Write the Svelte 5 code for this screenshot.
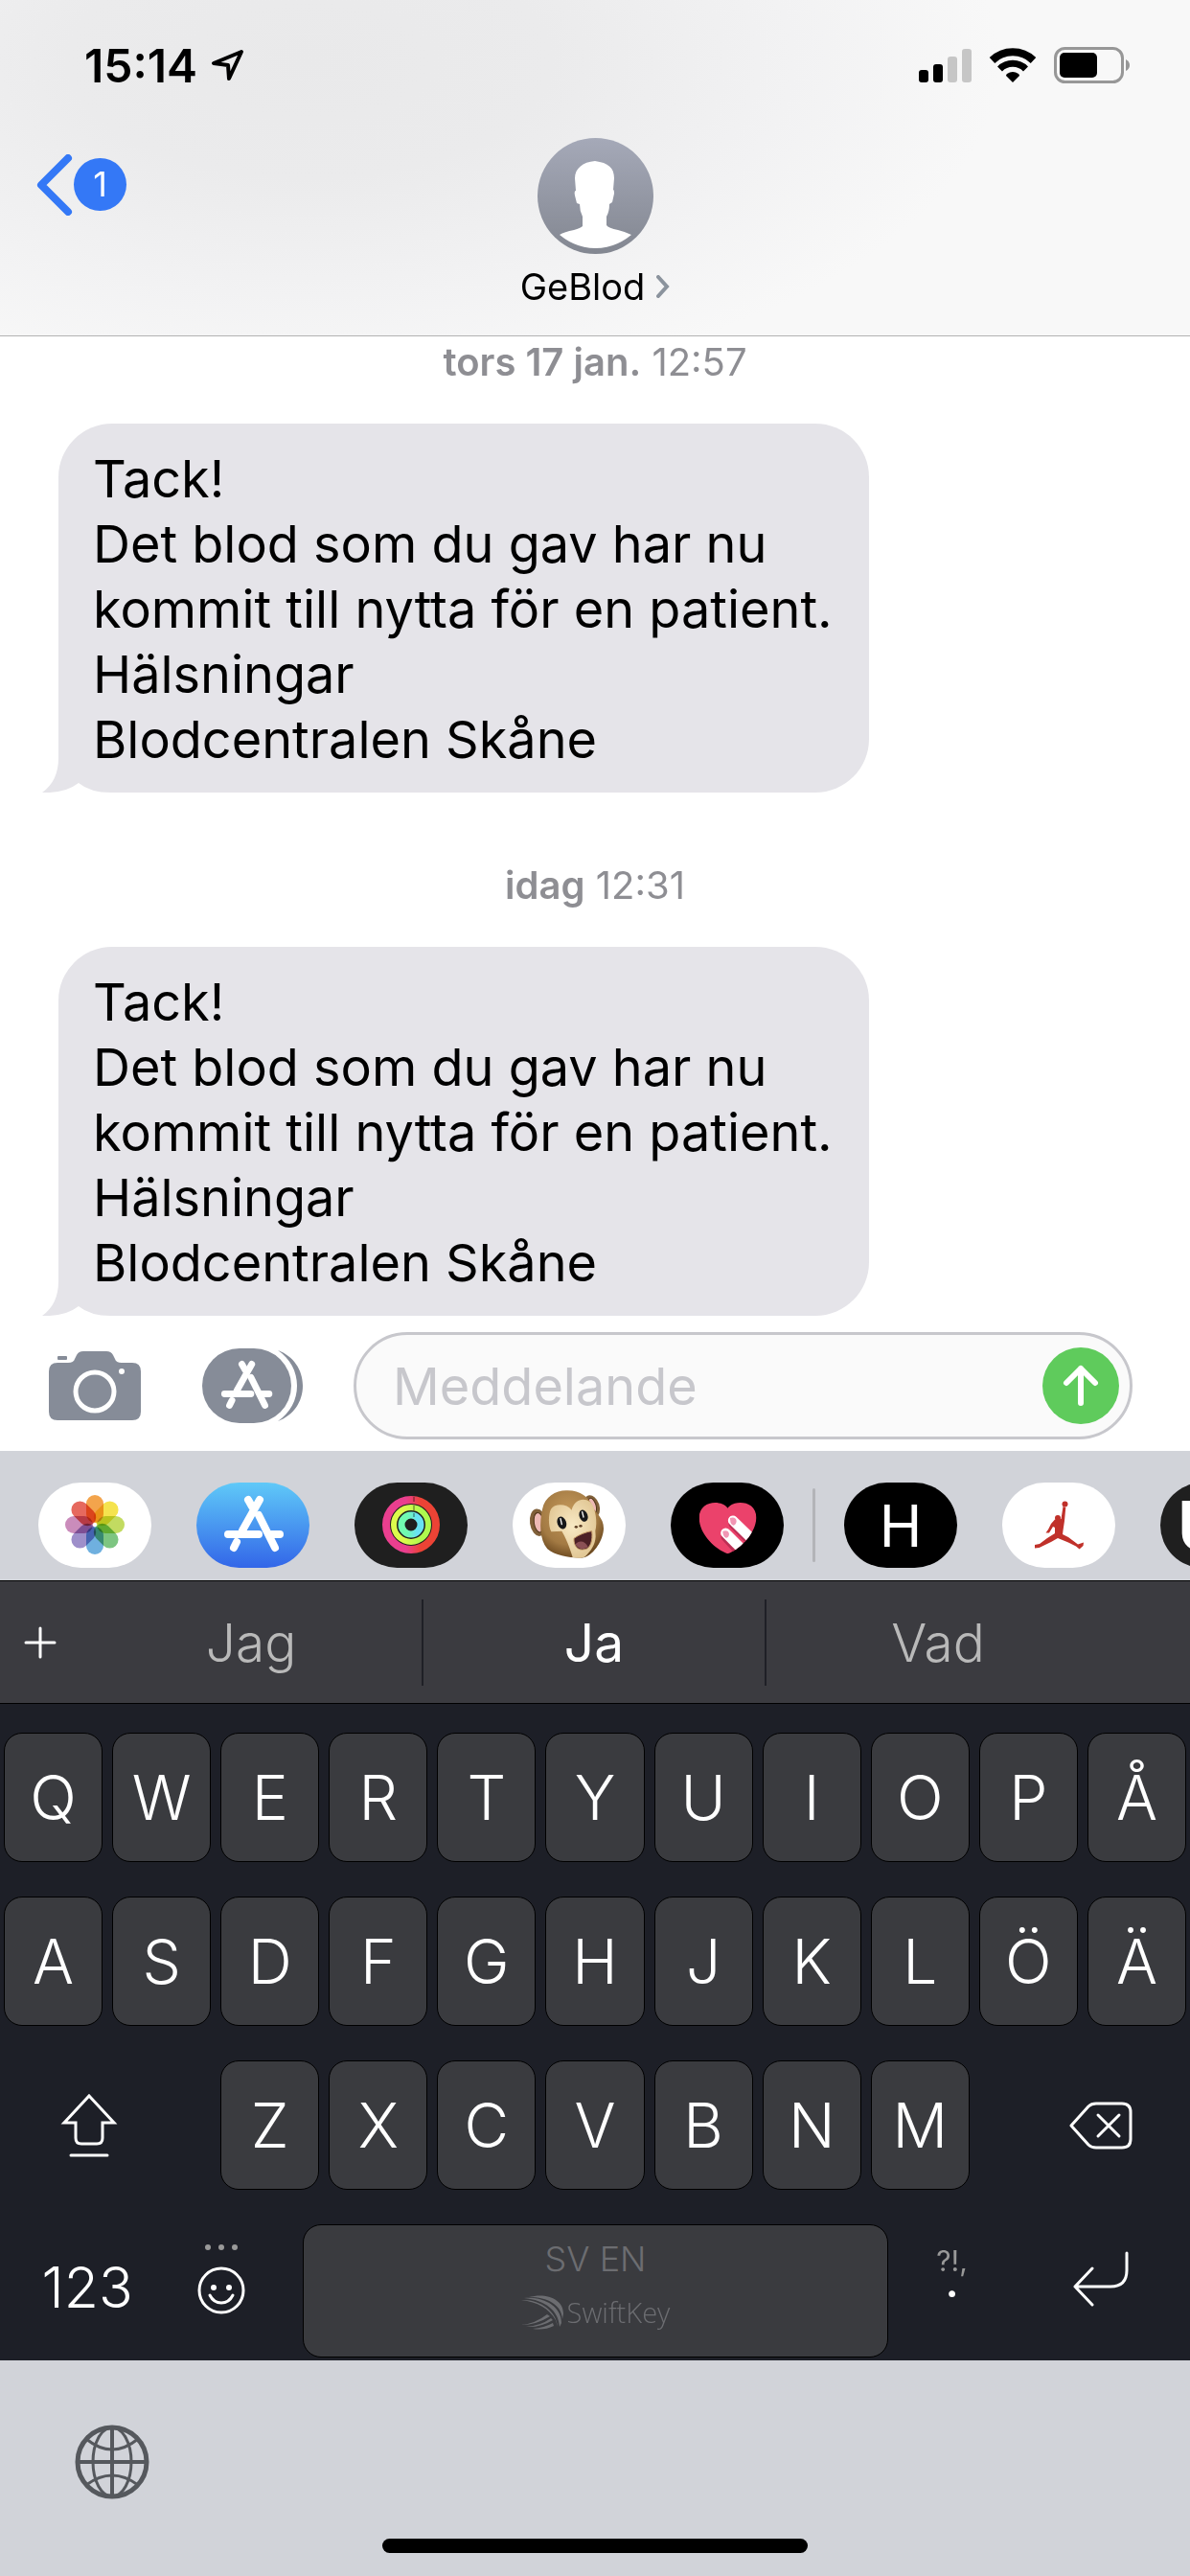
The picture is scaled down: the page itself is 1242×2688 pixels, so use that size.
<script>
  // --- State ---
  let draft = $state('');
  let messages = $state([
    {
      day: 'tors 17 jan.',
      time: '12:57',
      text: 'Tack!\nDet blod som du gav har nu kommit till nytta för en patient.\nHälsningar\nBlodcentralen Skåne'
    },
    {
      day: 'idag',
      time: '12:31',
      text: 'Tack!\nDet blod som du gav har nu kommit till nytta för en patient.\nHälsningar\nBlodcentralen Skåne'
    }
  ]);

  const suggestions = ['Jag', 'Ja', 'Vad'];
  const topRows = [[...'QWERTYUIOPÅ'], [...'ASDFGHJKLÖÄ']];
  const bottomRow = [...'ZXCVBNM'];

  const petals = ['#f29a38', '#f4e03a', '#bcd750', '#6fbf73', '#5fa8dc', '#9483c4', '#c57fb4', '#e4584c'];

  function type(text) {
    draft += text;
  }

  function erase() {
    draft = draft.slice(0, -1);
  }

  function sendMessage(e) {
    e.preventDefault();
    draft = '';
  }
</script>

{#snippet storeGlyph()}
  <g fill="none" stroke="#fff" stroke-width="8" stroke-linecap="round">
    <path d="M66 18 L48 50" />
    <path d="M54 18 L58 25" />
    <path d="M65 34 L82 68" />
    <path d="M33 54 H65" />
    <path d="M78 54 H87" />
    <path d="M42 62 L39 68" />
  </g>
{/snippet}

{#snippet key(letter)}
  <button class="key" onclick={() => type(letter)}>{letter}</button>
{/snippet}

<div class="phone">
  <header>
    <div class="status">
      <div class="clock">
        <span>15:14</span>
        <svg width="36" height="36" viewBox="0 0 36 36" aria-hidden="true">
          <path d="M32 4 L3 16 L18 18 L19 32 Z" fill="none" stroke="#000" stroke-width="4" stroke-linejoin="round" />
        </svg>
      </div>
      <div class="signals">
        <svg width="55" height="36" viewBox="0 0 55 36" aria-hidden="true">
          <rect x="0" y="23" width="10" height="13" rx="3" />
          <rect x="15" y="17" width="10" height="19" rx="3" />
          <rect x="30" y="9" width="10" height="27" rx="3" fill="#c6c6c6" />
          <rect x="45" y="1" width="10" height="35" rx="3" fill="#c6c6c6" />
        </svg>
        <svg width="50" height="36" viewBox="0 0 50 36" aria-hidden="true">
          <path d="M3.500 13 A31 31 0 0 1 46.500 13" fill="none" stroke="#000" stroke-width="8" />
          <path d="M11.500 22 A19 19 0 0 1 38.500 22" fill="none" stroke="#000" stroke-width="7" />
          <path d="M25 36 L18 29 Q18 28 19 27 Q25 23 31 27 Q32 28 32 29 Z" />
        </svg>
        <svg width="80" height="38" viewBox="0 0 80 38" aria-hidden="true">
          <rect x="1.500" y="1.500" width="70" height="35" rx="10" fill="none" stroke="#979797" stroke-width="3" />
          <rect x="6" y="6" width="39" height="26" rx="5" />
          <path d="M75 13 Q79 15 79 19 Q79 23 75 25 Z" fill="#979797" />
        </svg>
      </div>
    </div>

    <nav>
      <a class="back" href="#inbox" aria-label="Tillbaka">
        <svg width="38" height="64" viewBox="0 0 38 64" aria-hidden="true">
          <path d="M33 4 L5 32 L33 60" fill="none" stroke="#3478f6" stroke-width="8" stroke-linecap="round" stroke-linejoin="round" />
        </svg>
        <span class="count">1</span>
      </a>
      <a class="contact" href="#contact">
        <svg width="121" height="121" viewBox="0 0 121 121" aria-hidden="true">
          <defs>
            <linearGradient id="avatar" x1="0" y1="0" x2="0" y2="1">
              <stop offset="0" stop-color="#a5a9b8" />
              <stop offset="1" stop-color="#838791" />
            </linearGradient>
          </defs>
          <circle cx="60.500" cy="60.500" r="60.500" fill="url(#avatar)" />
          <path
            fill="#fff"
            d="M60 24 C47 25 39 32 39 42 L40 55 Q38 55 39 60 L41 68 L44 69 Q44 76 47 82 L47 92 Q45 94 38 96 Q28 98 23 101 Q40 115 60.500 115 Q81 115 98 101 Q92 98 84 96 Q74 94 72 91 L72 82 Q75 77 75 69 L78 67 L80 58 Q80 54 79 54 L80 42 C80 31 74 26 60 24 Z"
          />
        </svg>
        <span class="name">
          GeBlod
          <svg width="14" height="24" viewBox="0 0 14 24" aria-hidden="true">
            <path d="M2 2 L11 12 L2 22" fill="none" stroke="#8b939d" stroke-width="4" stroke-linecap="round" />
          </svg>
        </span>
      </a>
    </nav>
  </header>

  <main>
    {#each messages as msg}
      <div class="stamp"><strong>{msg.day}</strong> <time>{msg.time}</time></div>
      <div class="bubble">
        <svg class="tail" width="76" height="60" viewBox="0 0 76 60" aria-hidden="true">
          <path fill="#fff" d="M0 0 H17 V60 H0 Z M17 30 H74 V60 H17 Z" />
          <path fill="#e5e4e9" d="M17 0 H76 V60 H72 Q50 60 38 50 Q24 61 0 60 Q17 48 17 24 Z" />
        </svg>
        <p>{msg.text}</p>
      </div>
    {/each}
  </main>

  <form class="composer" onsubmit={sendMessage}>
    <button type="button" class="bare" aria-label="Kamera">
      <svg width="96" height="72" viewBox="0 0 96 72" fill="#868c98">
        <path d="M9 12 H20 Q26 12 27 8 L29 4 Q31 0 36 0 H60 Q65 0 67 4 L69 8 Q70 12 76 12 H87 Q96 12 96 21 V63 Q96 72 87 72 H9 Q0 72 0 63 V21 Q0 12 9 12 Z" />
        <rect x="9" y="5" width="10" height="4" rx="1" />
        <circle cx="48" cy="42" r="20" fill="none" stroke="#fff" stroke-width="5" />
        <circle cx="76" cy="21" r="3" fill="#fff" />
      </svg>
    </button>
    <button type="button" class="bare" aria-label="Appar">
      <svg width="105" height="78" viewBox="0 0 105 78" fill="#868c98">
        <rect width="93" height="78" rx="39" />
        <path d="M79 2 C95 8 105 22 105 39 S95 70 79 76 C92 67 99 54 99 39 S92 11 79 2 Z" />
        <g transform="translate(-5 1) scale(0.86)">{@render storeGlyph()}</g>
      </svg>
    </button>
    <div class="field">
      <input bind:value={draft} placeholder="Meddelande" aria-label="Meddelande" />
      <button class="bare" type="submit" aria-label="Skicka">
        <svg width="80" height="80" viewBox="0 0 80 80">
          <circle cx="40" cy="40" r="40" fill="#5fcb5c" />
          <path d="M40 58 V22 M25 37 L40 22 L55 37" fill="none" stroke="#fff" stroke-width="6" stroke-linecap="round" stroke-linejoin="round" />
        </svg>
      </button>
    </div>
  </form>

  <!-- iMessage app drawer -->
  <div class="apps">
    <button class="app" aria-label="Bilder">
      <svg viewBox="0 0 118 89">
        <g transform="translate(59 44)">
          {#each petals as color, i}
            <rect class="petal" x="-9" y="-31" width="18" height="29" rx="9" fill={color} transform="rotate({i * 45})" />
          {/each}
        </g>
      </svg>
    </button>
    <button class="app store" aria-label="App Store">
      <svg viewBox="0 0 118 89">{@render storeGlyph()}</svg>
    </button>
    <button class="app dark" aria-label="Aktivitet">
      <svg viewBox="0 0 118 89" fill="none">
        <defs>
          <linearGradient id="move"><stop offset="0.4" stop-color="#ea3f8f" /><stop offset="0.7" stop-color="#ec4335" /></linearGradient>
          <linearGradient id="exercise"><stop offset="0.3" stop-color="#dcfb4c" /><stop offset="0.8" stop-color="#aef94e" /></linearGradient>
          <linearGradient id="stand"><stop offset="0.3" stop-color="#70fbb0" /><stop offset="0.8" stop-color="#68e2f2" /></linearGradient>
        </defs>
        <circle cx="59" cy="44" r="26" stroke="url(#move)" stroke-width="8" />
        <circle cx="59" cy="44" r="18" stroke="url(#exercise)" stroke-width="6" />
        <circle cx="59" cy="44" r="10" stroke="url(#stand)" stroke-width="7" />
        <path d="M62 15 V20 M62 24 V29 M62 32 V36" stroke="#000" stroke-opacity="0.3" stroke-width="2" />
      </svg>
    </button>
    <button class="app" aria-label="Animoji">
      <svg viewBox="14 26 354 267">
        <defs>
          <radialGradient id="fur" cx="0.45" cy="0.35" r="0.65">
            <stop offset="0" stop-color="#c59a5c" />
            <stop offset="0.7" stop-color="#a37a43" />
            <stop offset="1" stop-color="#6f4c22" />
          </radialGradient>
          <radialGradient id="skin" cx="0.5" cy="0.45" r="0.6">
            <stop offset="0" stop-color="#f8e9c4" />
            <stop offset="1" stop-color="#e0c592" />
          </radialGradient>
        </defs>
        <ellipse cx="94" cy="151" rx="26" ry="43" fill="#80603a" transform="rotate(-8 94 151)" />
        <ellipse cx="96" cy="151" rx="15" ry="31" fill="#edb9b5" stroke="#4f3518" stroke-width="3" transform="rotate(-8 96 151)" />
        <ellipse cx="262" cy="101" rx="24" ry="36" fill="#80603a" transform="rotate(-18 262 101)" />
        <ellipse cx="264" cy="98" rx="11" ry="24" fill="#edb9b5" stroke="#4f3518" stroke-width="3" transform="rotate(-18 264 98)" />
        <path fill="url(#fur)" d="M107 110 C115 70 150 50 184 51 C225 50 253 72 263 98 C270 120 300 135 299 170 C298 205 270 250 240 260 C215 265 150 258 123 234 C98 205 98 150 107 110 Z" />
        <path fill="url(#skin)" d="M199 112 C183 91 146 91 134 109 C126 125 125 160 135 180 L168 178 C178 195 188 215 202 260 C218 264 232 263 241 258 C260 240 273 220 274 195 L273 177 C280 155 275 105 257 87 C235 71 207 81 199 112 Z" />
        <ellipse cx="168" cy="152" rx="14" ry="20" fill="#17181a" transform="rotate(-20 168 152)" />
        <ellipse cx="236" cy="130" rx="13" ry="19" fill="#17181a" transform="rotate(-20 236 130)" />
        <path d="M164 139 L168 157 M232 118 L236 134" stroke="#fff" stroke-width="4" stroke-linecap="round" />
        <ellipse cx="213" cy="165" rx="5" ry="4" fill="#5d3e24" />
        <ellipse cx="227" cy="162" rx="5" ry="4" fill="#5d3e24" />
        <path fill="#4c2026" stroke="#c39a67" stroke-width="3" d="M206 201 C220 190 245 180 262 178 C266 208 257 233 240 235 C218 241 205 224 206 201 Z" />
        <path fill="#8b5055" d="M211 220 C220 205 242 207 250 228 C235 237 222 235 211 220 Z" />
      </svg>
    </button>
    <button class="app black" aria-label="Digital Touch">
      <svg viewBox="509 26 354 267">
        <defs>
          <clipPath id="heart">
            <path d="M687 106 C705 80 778 80 777 137 C775 190 720 238 687 249 C650 235 599 190 598 137 C598 80 670 80 687 106 Z" />
          </clipPath>
        </defs>
        <g clip-path="url(#heart)">
          <rect x="590" y="80" width="200" height="180" fill="#eb426b" />
          <path d="M680 196 L740 262 M704 156 L780 232" stroke="#bd2f55" stroke-width="27" stroke-linecap="round" />
          <path d="M681 184 L745 248 M704 145 L790 229" stroke="#fff" stroke-width="31" stroke-linecap="round" />
          <path d="M695 137 Q713 132 715 147 Q714 159 705 160 Q694 156 695 137 Z M672 178 Q690 173 692 187 Q691 199 682 199 Q672 195 672 178 Z" fill="#f196b4" />
        </g>
      </svg>
    </button>
    <span class="split"></span>
    <button class="app black hm">H</button>
    <button class="app" aria-label="Jordan">
      <svg viewBox="0 0 118 89" fill="#c0312a">
        <circle cx="65.500" cy="22.500" r="3" />
        <circle cx="58" cy="37" r="3" />
        <path d="M63.500 25 L66.300 26 L65 40 L63.500 50 L63 54 L69 57 L79 64.500 L85 62.500 L84.500 66 L80.600 69.500 L77 66.500 L69 62.500 L58 58 L51 62 L38.600 68 L34 68.500 L34 65 L39 64 L47 58 L55 53 L55 47 L53 46 L49 52.500 L45.500 52.500 L48 49 L51 43 L55 38.500 L61.500 38 Z" />
      </svg>
    </button>
    <button class="app dark uber">U</button>
  </div>

  <section class="keyboard">
    <div class="suggestions">
      <button aria-label="Lägg till">
        <svg width="34" height="34" viewBox="0 0 34 34">
          <path d="M17 2 V32 M2 17 H32" stroke="#fff" stroke-width="3" stroke-linecap="round" />
        </svg>
      </button>
      {#each suggestions as word, i}
        <button class="word" class:best={i === 1} onclick={() => type(word + ' ')}>{word}</button>
      {/each}
    </div>

    <div class="rows">
      {#each topRows as row}
        <div class="row">
          {#each row as letter}
            {@render key(letter)}
          {/each}
        </div>
      {/each}

      <div class="row">
        <button class="side shift" aria-label="Skift">
          <svg width="60" height="68" viewBox="0 0 60 68" fill="none" stroke="#fff" stroke-width="3">
            <path d="M30 3 L56 31 H44 V47 Q44 53 38 53 H22 Q16 53 16 47 V31 H4 Z" />
            <path d="M11 65 H49" stroke-linecap="round" />
          </svg>
        </button>
        {#each bottomRow as letter}
          {@render key(letter)}
        {/each}
        <button class="side erase" aria-label="Radera" onclick={erase}>
          <svg width="66" height="50" viewBox="0 0 66 50" fill="none" stroke="#fff" stroke-width="3" stroke-linecap="round">
            <path d="M2 25 L20 5 Q23 2 28 2 H55 Q64 2 64 11 V39 Q64 48 55 48 H28 Q23 48 20 45 Z" stroke-linejoin="round" />
            <path d="M30 14 L52 36 M52 14 L30 36" />
          </svg>
        </button>
      </div>

      <div class="row last">
        <button class="side numbers">123</button>
        <button class="side high" aria-label="Emoji">
          <svg width="50" height="74" viewBox="0 0 50 74">
            <g fill="#999">
              <circle cx="11" cy="4" r="3" />
              <circle cx="25" cy="4" r="3" />
              <circle cx="39" cy="4" r="3" />
            </g>
            <circle cx="25" cy="49" r="23" fill="none" stroke="#fff" stroke-width="3" />
            <circle cx="17" cy="46" r="3" fill="#fff" />
            <circle cx="33" cy="46" r="3" fill="#fff" />
            <path d="M13 54 Q17 62 25 62 Q33 62 37 54" fill="none" stroke="#fff" stroke-width="3" stroke-linecap="round" />
          </svg>
        </button>
        <button class="key space" onclick={() => type(' ')}>
          <span>SV EN</span>
          <span class="brand">
            <svg width="44" height="36" viewBox="0 0 44 36" fill="#6c6d71" aria-hidden="true">
              <path d="M8 2 C26 -3 44 4 44 19 L43 25 C42 10 28 2 8 2 Z" />
              <path d="M3 3 C24 1 42 12 42 29 L40 33 C39 16 25 5 3 3 Z" />
              <path d="M0 5 C20 4 37 17 38 33 L36 26 C29 14 17 7 0 5 Z" />
              <path d="M0 31 Q14 30 27 20 L30 22 Q16 31 0 31 Z" />
              <path d="M5 33 Q20 32 31 24 L33 26 Q20 34 5 33 Z" />
              <path d="M12 35 Q24 34 33 29 L34 32 Q24 37 12 35 Z" />
            </svg>
            SwiftKey
          </span>
        </button>
        <button class="side marks" onclick={() => type('.')}>
          <span>?!,</span>
          <span class="dot">.</span>
        </button>
        <button class="side high" aria-label="Retur">
          <svg width="60" height="58" viewBox="0 0 60 58" fill="none" stroke="#fff" stroke-width="3" stroke-linecap="round">
            <path d="M57 2 V20 Q57 37 40 37 H3 M21 18 L3 37 L21 56" stroke-linejoin="round" />
          </svg>
        </button>
      </div>
    </div>
  </section>

  <footer>
    <button class="bare" aria-label="Byt tangentbord">
      <svg width="78" height="78" viewBox="0 0 78 78" fill="none" stroke="#55585d" stroke-width="3">
        <circle cx="39" cy="39" r="36" stroke-width="5" />
        <ellipse cx="39" cy="39" rx="20" ry="36" />
        <path d="M39 3 V75 M3 39 H75" stroke-width="4" />
        <path d="M12 15 Q39 37 66 15 M12 63 Q39 43 66 63" />
      </svg>
    </button>
    <div class="home"></div>
  </footer>
</div>

<style>
  :global(body) { background: #d1d3d9; }

  .phone {
    display: flex;
    flex-direction: column;
    min-height: 100vh;
    overflow: hidden;
    background: #fff;
    color: #000;
    font-family: Inter, "Liberation Sans", sans-serif;
  }

  button, input {
    margin: 0;
    padding: 0;
    border: 0;
    background: none;
    color: inherit;
    font: inherit;
  }
  button { cursor: pointer; }
  svg { display: block; }
  a { color: inherit; text-decoration: none; }
  .bare { flex: none; }

  header {
    border-bottom: 1px solid #b2b2b2;
    background:
      radial-gradient(ellipse 58% 100% at 26% 18%, #e9e9ea 0%, #ebebec 35%, #f2f2f3 70%, #f8f8f8 100%);
  }

  .status {
    display: flex;
    justify-content: space-between;
    align-items: center;
    height: 136px;
    padding: 0 62px 0 88px;
  }
  .clock {
    display: flex;
    align-items: center;
    gap: 14px;
    font-size: 48px;
    font-weight: 600;
  }
  .signals { display: flex; align-items: center; gap: 18px; }

  nav {
    display: grid;
    grid-template-columns: 1fr auto 1fr;
    align-items: start;
    padding: 8px 38px 29px;
  }
  .back { display: flex; align-items: center; gap: 1px; height: 97px; }
  .count {
    width: 55px;
    border-radius: 50%;
    background: #3478f6;
    color: #fff;
    font-size: 36px;
    line-height: 55px;
    text-align: center;
  }
  .contact {
    display: flex;
    flex-direction: column;
    align-items: center;
    gap: 12px;
    font-size: 38px;
    line-height: 44px;
  }
  .name { display: flex; align-items: center; gap: 12px; }

  main {
    display: flex;
    flex-direction: column;
    padding: 5px 61px 0;
  }
  .stamp {
    color: #8e8e93;
    font-size: 40px;
    line-height: 44px;
    text-align: center;
  }
  .stamp strong { font-weight: 600; }
  .bubble + .stamp { margin-top: 75px; }

  .bubble {
    position: relative;
    align-self: flex-start;
    box-sizing: border-box;
    max-width: 846px;
    margin-top: 42px;
    padding: 24px 36px 21px;
    border-radius: 56px;
    background: #e5e4e9;
    font-size: 54px;
    line-height: 68px;
  }
  /* keeps the text above the tail */
  .bubble p {
    position: relative;
    margin: 0;
    white-space: pre-line;
  }
  .tail { position: absolute; left: -17px; bottom: 0; }

  .composer {
    display: flex;
    align-items: center;
    padding: 17px 60px 12px 51px;
  }
  .composer > .bare + .bare { margin-left: 64px; }
  .field {
    display: flex;
    flex: 1;
    align-items: center;
    min-width: 0;
    height: 106px;
    margin-left: 53px;
    padding: 0 11px 0 38px;
    border: 3px solid #c7c7cc;
    border-radius: 56px;
    background: #fafafa;
  }
  .field input {
    flex: 1;
    min-width: 0;
    outline: none;
    font-size: 54px;
  }
  .field input::placeholder { color: #c7c7cc; opacity: 1; }

  .apps {
    display: flex;
    align-items: center;
    gap: 47px;
    height: 135px;
    padding: 0 0 0 40px;
    box-sizing: border-box;
    overflow: hidden;
    background: #d1d3d9;
  }
  .app {
    flex: none;
    width: 118px;
    height: 89px;
    margin-top: 20px;
    border-radius: 45px;
    overflow: hidden;
    background: #fff;
    color: #fff;
  }
  .store { background: linear-gradient(#5fc9f8, #3366e8); }
  .dark { background: #1f1f1f; }
  .black { background: #000; }
  .hm { font-size: 60px; }
  .uber {
    padding-left: 18px;
    font-size: 72px;
    font-weight: 700;
    line-height: 89px;
    text-align: left;
  }
  .petal { mix-blend-mode: multiply; opacity: 0.9; }
  .split {
    flex: none;
    width: 3px;
    height: 77px;
    margin: 20px -17px 0;
    border-radius: 2px;
    background: #b3b4b8;
  }

  .keyboard { background: #1d1f27; color: #fff; }
  .suggestions {
    display: grid;
    grid-template-columns: 84px repeat(3, 1fr);
    align-items: center;
    height: 127px;
    padding-right: 84px;
    border-top: 1px solid #000;
    border-bottom: 1px solid #000;
    background: #3b3b40;
  }
  .suggestions svg { margin: 0 auto; }
  .word {
    height: 90px;
    border-right: 2px solid #1f2026;
    color: #b9b9b9;
    font-size: 55px;
    font-weight: 300;
  }
  .word:last-child { border-right: 0; }
  .best { color: #fff; font-weight: 400; }

  .rows {
    display: flex;
    flex-direction: column;
    gap: 36px;
    padding: 30px 4px 3px;
  }
  .row {
    display: grid;
    grid-template-columns: repeat(11, minmax(0, 1fr));
    gap: 10px;
  }
  .key {
    height: 135px;
    border: 1px solid #000;
    border-radius: 19px;
    background: #3a3b3f;
    font-size: 64px;
    font-weight: 300;
  }
  .side {
    display: flex;
    justify-content: center;
    align-items: center;
  }
  .shift, .erase { grid-column: span 2; width: 178px; }
  .erase { justify-self: end; }

  .last {
    grid-template-columns: 174fr 106fr 31fr 611fr 132fr 178fr;
    gap: 0;
  }
  .numbers {
    padding-bottom: 8px;
    font-size: 59px;
    font-weight: 300;
  }
  .high { padding-bottom: 26px; }
  .space {
    display: flex;
    grid-column: 4;
    flex-direction: column;
    align-items: center;
    gap: 16px;
    height: 139px;
    padding-top: 13px;
    color: #6c6d71;
    font-size: 36px;
    line-height: 44px;
  }
  .brand {
    display: flex;
    align-items: center;
    gap: 4px;
    font-family: "Open Sans", sans-serif;
    font-size: 29px;
    line-height: 36px;
  }
  .marks {
    flex-direction: column;
    padding-bottom: 40px;
    color: #999;
    font-size: 30px;
    line-height: 28px;
  }
  .dot {
    color: #fff;
    font-size: 34px;
    font-weight: 900;
    line-height: 24px;
  }

  footer {
    display: flex;
    flex: 1;
    flex-direction: column;
    justify-content: space-between;
    align-items: flex-start;
    padding: 67px 78px 24px;
    background: #d1d3d9;
  }
  .home {
    align-self: center;
    width: 444px;
    height: 15px;
    border-radius: 8px;
    background: #000;
  }
</style>
